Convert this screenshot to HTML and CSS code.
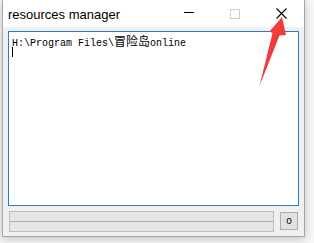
FILE: index.html
```html
<!DOCTYPE html>
<html>
<head>
<meta charset="utf-8">
<link rel="stylesheet" href="styles.css">
</head>
<body>
<div class="window">
  <div class="titlebar">
    <div class="title">resources manager</div>
    <div class="caption-buttons">
      <div class="cap-btn"><svg width="10" height="10" viewBox="0 0 10 10"><rect x="0" y="3" width="10" height="1" fill="#000"/></svg></div>
      <div class="cap-btn"><div class="max-icon"></div></div>
      <div class="cap-btn"><svg width="11" height="11" viewBox="0 0 11 11"><path d="M0.5 0.5 L10.5 10.5 M10.5 0.5 L0.5 10.5" stroke="#000" stroke-width="1.1"/></svg></div>
    </div>
  </div>
  <div class="client">
    <div class="edit">
      <div class="line">H:\Program Files\<span class="cjk">冒险岛</span>online</div>
      <div class="line"><span class="caret"></span></div>
    </div>
    <div class="bottom">
      <div class="bars">
        <div class="bar"></div>
        <div class="bar"></div>
      </div>
      <div class="btn">o</div>
    </div>
  </div>
</div>
<svg class="arrow" width="314" height="243" viewBox="0 0 314 243">
  <path d="M282 17 L286 35 L279.5 35.5 L259.5 86 L272.5 33 L269.5 31.5 Z" fill="#f23b3b"/>
</svg>
</body>
</html>
```
FILE: styles.css
```css
html, body {
  margin: 0;
  padding: 0;
}
body {
  width: 314px;
  height: 243px;
  background: #f7f7f7;
  position: relative;
  overflow: hidden;
  font-family: "Liberation Sans", Arial, sans-serif;
}
.window {
  margin-left: 2px;
  width: 301px;
  height: 236px;
  border-left: 1px solid #a6a6a6;
  border-right: 1px solid #a6a6a6;
  border-bottom: 1px solid #a6a6a6;
  background: #f0f0f0;
  box-shadow: 0 2px 9px rgba(0,0,0,0.22);
  display: flex;
  flex-direction: column;
}
.titlebar {
  height: 27px;
  background: #ffffff;
  display: flex;
  align-items: center;
}
.title {
  flex: 1;
  padding-left: 5px;
  font-size: 13px;
  color: #000;
  padding-top: 1px;
}
.caption-buttons {
  display: flex;
  height: 27px;
  flex: none;
}
.cap-btn {
  width: 46px;
  height: 27px;
  display: flex;
  align-items: center;
  justify-content: center;
  flex: none;
}
.cap-btn svg {
  display: block;
  flex: none;
}
.max-icon {
  width: 8px;
  height: 8px;
  border: 1px solid #cccccc;
  flex: none;
}
.client {
  flex: 1;
  padding: 4px 5px 0 5px;
  display: flex;
  flex-direction: column;
}
.edit {
  height: 175px;
  box-sizing: border-box;
  border: 1px solid #2b7bc0;
  background: #ffffff;
  padding: 3px 3px;
  font-family: "Liberation Mono", "DejaVu Sans Mono", monospace;
  font-size: 10px;
  line-height: 12px;
  color: #000;
}
.line {
  height: 12px;
  white-space: nowrap;
}
.cjk {
  font-family: "Noto Sans CJK SC", sans-serif;
  font-size: 12px;
  line-height: 12px;
}
.caret {
  display: inline-block;
  width: 1px;
  height: 10px;
  background: #000;
  vertical-align: top;
}
.bottom {
  margin-top: 5px;
  display: flex;
  align-items: flex-start;
  gap: 6px;
  padding-left: 1px;
}
.bars {
  width: 265px;
  display: flex;
  flex-direction: column;
}
.bar {
  height: 9px;
  border: 1px solid #bdbdbd;
  background: #e6e6e6;
}
.bar + .bar {
  border-top: 1px solid #b0b0b0;
  margin-top: -1px;
}
.btn {
  margin-top: 1px;
  width: 16px;
  height: 16px;
  border: 1px solid #adadad;
  background: #e1e1e1;
  font-size: 10px;
  line-height: 15px;
  text-align: center;
  color: #000;
}
.arrow {
  position: absolute;
  left: 0;
  top: 0;
  pointer-events: none;
}
```
